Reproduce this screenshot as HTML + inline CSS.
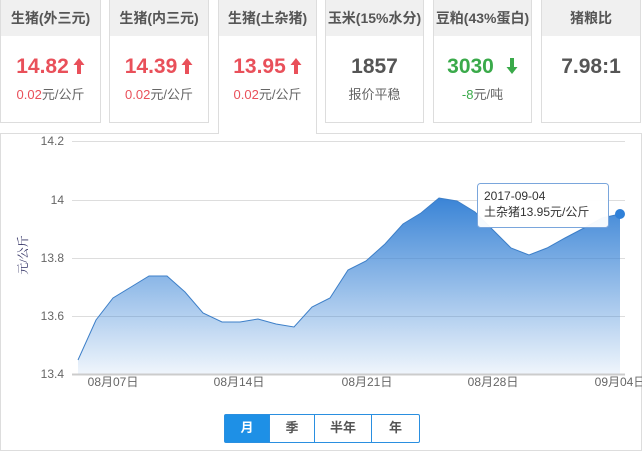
<!DOCTYPE html>
<html><head><meta charset="utf-8"><style>
body{margin:0;width:642px;height:451px;background:#fff;font-family:"Liberation Sans","Noto Sans CJK SC",sans-serif;overflow:hidden;position:relative}
.card{position:absolute;top:0;height:123px;border:1px solid #ddd;border-top:none;box-sizing:border-box;background:#fff;text-align:center}
.card .h{height:36px;background:#f0f0f0;line-height:36px;font-size:14px;font-weight:bold;color:#555}
.card .v{margin-top:16px;font-size:21px;font-weight:bold;line-height:30px}
.card .s{font-size:13px;color:#666;margin-top:2px}
.r{color:#e9505a}.g{color:#3aaa4a}.k{color:#555}
.panel{position:absolute;left:0;top:133px;width:642px;height:318px;border:1px solid #ddd;box-sizing:border-box}
.act{height:134px;border-bottom:none;z-index:2}
.btns{position:absolute;top:414px;left:224px;height:27px;display:flex;border:1px solid #2a8fe0;border-radius:2px;font-size:13px;font-weight:bold;color:#555}
.btns div{line-height:25px;text-align:center;border-left:1px solid #2a8fe0}
svg.a{vertical-align:-1px;margin-left:4px}
</style></head><body>
<div class="panel"></div>
<div class="card" style="left:0;width:101px"><div class="h">生猪(外三元)</div><div class="v r">14.82<svg class="a" width="12" height="16"><path d="M6 0L11.5 7H8V16H4V7H0.5Z" fill="#e9505a"/></svg></div><div class="s"><span class="r">0.02</span>元/公斤</div></div>
<div class="card" style="left:109px;width:100px"><div class="h">生猪(内三元)</div><div class="v r">14.39<svg class="a" width="12" height="16"><path d="M6 0L11.5 7H8V16H4V7H0.5Z" fill="#e9505a"/></svg></div><div class="s"><span class="r">0.02</span>元/公斤</div></div>
<div class="card act" style="left:218px;width:99px"><div class="h">生猪(土杂猪)</div><div class="v r">13.95<svg class="a" width="12" height="16"><path d="M6 0L11.5 7H8V16H4V7H0.5Z" fill="#e9505a"/></svg></div><div class="s"><span class="r">0.02</span>元/公斤</div></div>
<div class="card" style="left:325px;width:99px"><div class="h">玉米(15%水分)</div><div class="v k">1857</div><div class="s">报价平稳</div></div>
<div class="card" style="left:433px;width:99px"><div class="h">豆粕(43%蛋白)</div><div class="v g">3030<svg class="a" style="margin-left:12px" width="12" height="16"><path d="M6 16L11.5 9H8V0H4V9H0.5Z" fill="#3aaa4a"/></svg></div><div class="s"><span class="g">-8</span>元/吨</div></div>
<div class="card" style="left:541px;width:100px"><div class="h">猪粮比</div><div class="v k">7.98:1</div></div>
<svg style="position:absolute;left:0;top:0" width="642" height="451">
<defs><linearGradient id="gr" x1="0" y1="0" x2="0" y2="1"><stop offset="0" stop-color="#3a84d6"/><stop offset="1" stop-color="#3a84d6" stop-opacity="0.08"/></linearGradient></defs>
<g stroke="#ddd" stroke-width="1"><line x1="72" y1="141.5" x2="625" y2="141.5"/><line x1="72" y1="200.5" x2="625" y2="200.5"/><line x1="72" y1="258.5" x2="625" y2="258.5"/><line x1="72" y1="316.5" x2="625" y2="316.5"/></g>
<path fill="url(#gr)" d="M78,360 L96,320 113,298 131,287 149,276 167,276 185,292 203,313 222,322 240,322 258,319 276,324 294,327 312,307 330,298 348,270 366,261 385,244 403,224 421,213 439,198 457,201 475,212 493,230 511,248 529,255 547,248 565,238 584,228 602,218 620,214 L620,374 L78,374Z"/>
<polyline fill="none" stroke="#3d7fc8" stroke-width="1" points="78,360 96,320 113,298 131,287 149,276 167,276 185,292 203,313 222,322 240,322 258,319 276,324 294,327 312,307 330,298 348,270 366,261 385,244 403,224 421,213 439,198 457,201 475,212 493,230 511,248 529,255 547,248 565,238 584,228 602,218 620,214"/>
<line x1="72" y1="374.5" x2="625" y2="374.5" stroke="#ccc" stroke-width="2"/>
<g font-size="12" fill="#666" text-anchor="end"><text x="64" y="145">14.2</text><text x="64" y="204">14</text><text x="64" y="262">13.8</text><text x="64" y="320">13.6</text><text x="64" y="378">13.4</text></g>
<g font-size="12" fill="#666" text-anchor="middle"><text x="113" y="386">08月07日</text><text x="239" y="386">08月14日</text><text x="367" y="386">08月21日</text><text x="493" y="386">08月28日</text><text x="620" y="386">09月04日</text></g>
<text transform="translate(27,255) rotate(-90)" font-size="12" fill="#336" text-anchor="middle" font-family="Liberation Serif,Noto Serif CJK SC,serif">元/公斤</text>
<circle cx="620" cy="214" r="5" fill="#2f80d8"/>
<rect x="477.5" y="183.5" width="131" height="44" rx="3" fill="rgba(255,255,255,0.95)" stroke="#7aa6dc"/>
<text x="484" y="200" font-size="12" fill="#333">2017-09-04</text>
<text x="484" y="216" font-size="12" fill="#333">土杂猪13.95元/公斤</text>
</svg>
<div class="btns"><div style="width:44px;background:#1e90e6;color:#fff;border:none">月</div><div style="width:44px">季</div><div style="width:56px">半年</div><div style="width:47px">年</div></div>
</body></html>
